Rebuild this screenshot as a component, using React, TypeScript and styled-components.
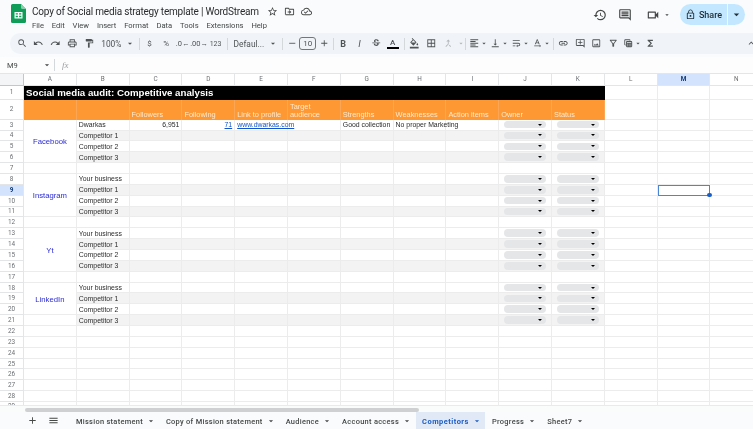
import React from 'react';
import styled, { createGlobalStyle } from 'styled-components';
import {
  MdAdd, MdArrowDropDown, MdBorderAll, MdCallMerge, MdFormatAlignLeft, MdFormatColorFill, MdFormatPaint,
  MdFunctions, MdHistory, MdKeyboardArrowUp, MdLockOutline, MdMenu, MdOutlineAddComment, MdOutlineCloudDone,
  MdOutlineComment, MdOutlineDriveFileMove, MdOutlineFilterAlt, MdOutlineImage, MdOutlineLink, MdOutlinePrint,
  MdOutlineTableView, MdOutlineVideocam, MdRedo, MdRemove, MdSearch, MdStarBorder, MdStrikethroughS, MdTextRotationNone,
  MdUndo, MdVerticalAlignBottom, MdWrapText,
} from 'react-icons/md';

const Global = createGlobalStyle`
  html, body { margin: 0; padding: 0; height: 100%; background: #f9fbfd; }
  * { box-sizing: border-box; }
`;

const Page = styled.div`
  width: 753px;
  height: 429px;
  overflow: hidden;
  display: flex;
  flex-direction: column;
  font-family: Roboto, "Liberation Sans", sans-serif;
  color: #444746;
  background: #f9fbfd;
  filter: blur(0.3px);
`;

const TitleBar = styled.header`
  height: 33px;
  flex: none;
  display: flex;
  align-items: flex-start;
  padding: 4px 8px 0 11px;
`;

const TitleText = styled.div`
  margin-left: 6px;
  display: flex;
  flex-direction: column;
`;

const TitleRow = styled.div`
  height: 15px;
  display: flex;
  align-items: center;
  font-size: 10px;
  letter-spacing: -0.2px;
  color: #2b2c2e;
  white-space: nowrap;
`;

const TitleIcons = styled.div`
  display: flex;
  align-items: center;
  gap: 6px;
  margin-left: 8px;
  font-size: 11px;
  color: #444746;
  & svg { display: block; }
`;

const Menu = styled.nav`
  height: 13px;
  display: flex;
  align-items: center;
  gap: 7.9px;
  font-size: 7.6px;
  color: #444746;
`;

const RightActions = styled.div`
  margin-left: auto;
  display: flex;
  align-items: center;
  height: 21px;
  font-size: 14px;
  & svg { display: block; }
`;

const Action = styled.span<{ $w: number; $pl?: number }>`
  width: ${p => p.$w}px;
  padding-left: ${p => p.$pl ?? 0}px;
  display: flex;
  align-items: center;
  justify-content: center;
`;

const Share = styled.div`
  width: 65px;
  height: 21px;
  margin-left: 9px;
  border-radius: 11px;
  background: #c2e7ff;
  display: flex;
  align-items: center;
  font-size: 9px;
  font-weight: 500;
  color: #23303a;
`;

const ShareMain = styled.div`
  flex: 1;
  display: flex;
  align-items: center;
  justify-content: center;
  gap: 3px;
  height: 100%;
  border-right: 1px solid #f0f8fe;
  font-size: 9px;
  & svg { font-size: 11px; }
`;

const ShareCaret = styled.div`
  width: 17px;
  display: flex;
  justify-content: center;
  font-size: 13px;
`;

const Toolbar = styled.div`
  height: 21px;
  flex: none;
  margin-left: 10px;
  padding-left: 3.6px;
  border-radius: 10px 0 0 10px;
  background: #f0f4f9;
  display: flex;
  align-items: center;
  font-size: 10.5px;
  color: #505355;
`;

const Tool = styled.span<{ $w?: number; $bold?: boolean; $italic?: boolean; $size?: number; $muted?: boolean }>`
  width: ${p => p.$w ?? 16.5}px;
  flex: none;
  display: flex;
  align-items: center;
  justify-content: center;
  white-space: nowrap;
  font-size: ${p => (p.$size ? `${p.$size}px` : 'inherit')};
  font-weight: ${p => (p.$bold ? 700 : 400)};
  font-style: ${p => (p.$italic ? 'italic' : 'normal')};
  color: ${p => (p.$muted ? '#b4b7b9' : 'inherit')};
  & svg { display: block; }
`;

const Caret = styled(Tool).attrs({ children: <MdArrowDropDown /> })`
  font-size: 11px;
`;

const Sep = styled.i<{ $l: number }>`
  width: 1px;
  height: 12px;
  flex: none;
  margin-left: ${p => p.$l}px;
  margin-right: 1px;
  background: #d5d8db;
`;

const SizeBox = styled.span`
  width: 17px;
  height: 13px;
  flex: none;
  border: 1px solid #747775;
  border-radius: 3px;
  display: flex;
  align-items: center;
  justify-content: center;
  font-size: 8px;
`;

const ColorSwatch = styled.span<{ $c: string }>`
  display: flex;
  flex-direction: column;
  align-items: center;
  line-height: 8px;
  font-size: 8px;
  font-weight: 500;
  &::after { content: ''; width: 12px; height: 2px; background: ${p => p.$c}; }
`;

const Collapse = styled(Tool)`
  margin-left: auto;
  margin-right: -6px;
`;

const FormulaBar = styled.div`
  height: 16px;
  flex: none;
  margin-top: 3px;
  display: flex;
  align-items: center;
  padding-left: 7px;
  background: #fdfdfe;
  font-size: 7.5px;
  color: #444746;
`;

const NameBox = styled.span`
  width: 33px;
`;

const Fx = styled.span`
  margin-left: 6px;
  font-family: "Liberation Serif", serif;
  font-style: italic;
  font-size: 9px;
  color: #9a9da0;
`;

const SheetArea = styled.div`
  flex: 1;
  min-height: 0;
  overflow: hidden;
  background: #fff;
  border-top: 1px solid #e3e5e7;
`;

const Sheet = styled.div`
  display: grid;
  width: 764px;
  grid-template-columns: 24px repeat(14, 52.8px);
  grid-template-rows: 11.6px 14.5px 19.6px repeat(26, 10.87px);
  font-family: "Liberation Sans", Arial, sans-serif;
  font-size: 6.9px;
  color: #2b2b2b;
`;

const Head = styled.div<{ $active?: boolean; $corner?: boolean }>`
  display: flex;
  align-items: center;
  justify-content: center;
  font-family: Roboto, sans-serif;
  font-size: 6.4px;
  font-weight: ${p => (p.$active ? 700 : 400)};
  color: ${p => (p.$active ? '#123a78' : '#6b6f73')};
  background: ${p => (p.$active ? '#d3e3fd' : p.$corner ? '#f4f5f6' : '#fff')};
  border-right: ${p => (p.$corner ? '1.5px solid #c4c7c9' : '1px solid #e3e5e7')};
  border-bottom: ${p => (p.$corner ? '1.5px solid #c4c7c9' : '1px solid #e3e5e7')};
`;

const Cell = styled.div<{ $grey?: boolean; $right?: boolean; $selected?: boolean; $spill?: boolean }>`
  position: relative;
  display: flex;
  align-items: center;
  justify-content: ${p => (p.$right ? 'flex-end' : 'flex-start')};
  padding: 0 2px;
  white-space: nowrap;
  min-width: 0;
  background: ${p => (p.$grey ? '#f3f3f3' : '#fff')};
  border-right: 1px solid #ececec;
  border-bottom: 1px solid #ececec;
  ${p => p.$spill && 'z-index: 1;'}
  ${p => p.$selected && 'outline: 1.4px solid #4a86d8; outline-offset: -1px; z-index: 2;'}
`;

const Handle = styled.span`
  position: absolute;
  right: -2.5px;
  bottom: -2.5px;
  width: 4.5px;
  height: 4.5px;
  border-radius: 50%;
  background: #1a5fc8;
`;

const TitleCell = styled.div`
  grid-column: span 11;
  display: flex;
  align-items: center;
  padding: 0 2px;
  background: #000;
  color: #fff;
  font-size: 9.7px;
  font-weight: 700;
  white-space: nowrap;
`;

const HeaderCell = styled.div`
  display: flex;
  align-items: flex-end;
  padding: 0 2px 0.5px;
  background: #fd9832;
  color: #ffe9cf;
  font-size: 7.4px;
  line-height: 8px;
  border-right: 1px solid #fba655;
`;

const Platform = styled.div<{ $span: number }>`
  grid-row: span ${p => p.$span};
  display: flex;
  align-items: center;
  justify-content: center;
  padding-top: 1.5px;
  background: #fff;
  color: #2a2ad4;
  font-size: 7.7px;
  border-right: 1px solid #ececec;
  border-bottom: 1px solid #ececec;
`;

const LinkText = styled.a`
  color: #1155cc;
  text-decoration: underline;
`;

const Chip = styled.div`
  flex: 1;
  height: 7.5px;
  margin: 0 3px;
  padding-right: 4px;
  border-radius: 4px;
  background: #e4e6e8;
  display: flex;
  align-items: center;
  justify-content: flex-end;
  &::after {
    content: '';
    border-left: 2.5px solid transparent;
    border-right: 2.5px solid transparent;
    border-top: 2.8px solid #000;
  }
`;

const ScrollTrack = styled.div`
  height: 7.5px;
  flex: none;
  padding: 2px 0 1px 25px;
  background: #fafbfb;
  border-top: 1px solid #e9eaeb;
`;

const ScrollThumb = styled.div`
  width: 394px;
  height: 4.5px;
  border-radius: 3px;
  background: #cfd0d1;
`;

const TabBar = styled.footer`
  height: 17px;
  flex: none;
  display: flex;
  align-items: stretch;
  padding-left: 23px;
  background: #f9fbfd;
  font-size: 7.45px;
  letter-spacing: 0.29px;
  font-weight: 500;
  color: #444746;
`;

const TabTool = styled.span`
  width: 18px;
  margin-right: 3px;
  display: flex;
  align-items: center;
  justify-content: center;
  font-size: 11px;
`;

const Tab = styled.div<{ $active?: boolean }>`
  display: flex;
  align-items: center;
  gap: 3px;
  padding: 1px 3px 0 6px;
  font-weight: ${p => (p.$active ? 700 : 500)};
  letter-spacing: ${p => (p.$active ? '0.5px' : 'inherit')};
  color: ${p => (p.$active ? '#1a5bc4' : '#444746')};
  background: ${p => (p.$active ? '#e1e9f7' : 'transparent')};
  white-space: nowrap;
  & svg { font-size: 10px; }
`;

const Tabs = styled.div`
  margin-left: 5px;
  display: flex;
  gap: 1px;
`;

const columns = 'ABCDEFGHIJKLMN'.split('');
const menus = ['File', 'Edit', 'View', 'Insert', 'Format', 'Data', 'Tools', 'Extensions', 'Help'];
const tabs = ['Mission statement', 'Copy of Mission statement', 'Audience', 'Account access', 'Competitors', 'Progress', 'Sheet7'];
const headers: Record<string, string> = {
  C: 'Followers', D: 'Following', E: 'Link to profile', F: 'Target audience', G: 'Strengths',
  H: 'Weaknesses', I: 'Action items', J: 'Owner', K: 'Status',
};
// LinkedIn is only merged over three rows in the sheet, so it sits higher than the rest
const platforms: Record<number, { name: string; span: number }> = {
  3: { name: 'Facebook', span: 4 },
  8: { name: 'Instagram', span: 4 },
  13: { name: 'Yt', span: 4 },
  18: { name: 'LinkedIn', span: 3 },
};
const mergedAway = [4, 5, 6, 9, 10, 11, 14, 15, 16, 19, 20];
const greyRows = [4, 6, 9, 11, 14, 16, 19, 21];
const rowNames: Record<number, string> = {
  3: 'Dwarkas', 4: 'Competitor 1', 5: 'Competitor 2', 6: 'Competitor 3',
  8: 'Your business', 9: 'Competitor 1', 10: 'Competitor 2', 11: 'Competitor 3',
  13: 'Your business', 14: 'Competitor 1', 15: 'Competitor 2', 16: 'Competitor 3',
  18: 'Your business', 19: 'Competitor 1', 20: 'Competitor 2', 21: 'Competitor 3',
};

const cellContent = (row: number, col: string) => {
  if (col === 'B') return rowNames[row];
  if ((col === 'J' || col === 'K') && rowNames[row]) return <Chip />;
  if (row !== 3) return null;
  if (col === 'C') return '6,951';
  if (col === 'D') return <LinkText>71</LinkText>;
  if (col === 'E') return <LinkText>www.dwarkas.com</LinkText>;
  if (col === 'G') return 'Good collection';
  if (col === 'H') return 'No proper Marketing';
  return null;
};

const inTable = (col: string) => col <= 'K';

const SheetsLogo = () => (
  <svg width="15" height="19" viewBox="0 0 15 19">
    <path d="M1.5 0H10l5 5v12.5a1.5 1.5 0 0 1-1.5 1.5h-12A1.5 1.5 0 0 1 0 17.500V1.500A1.500 1.500 0 0 1 1.500 0z" fill="#0f9d58" />
    <path d="M10 0l5 5h-3.500A1.500 1.500 0 0 1 10 3.500z" fill="#87ceac" />
    <path d="M3.500 8h8v6.500h-8zM4.700 9.200v1.400h2.200V9.200zm3.400 0v1.400h2.200V9.200zm-3.400 2.600v1.500h2.200v-1.500zm3.400 0v1.500h2.200v-1.500z" fill="#fff" fillRule="evenodd" />
  </svg>
);

const App = () => {
  const rows = Array.from({ length: 29 }, (_, i) => i + 1);

  return (
    <Page>
      <Global />
      <TitleBar>
        <SheetsLogo />
        <TitleText>
          <TitleRow>
            Copy of Social media strategy template | WordStream
            <TitleIcons>
              <MdStarBorder />
              <MdOutlineDriveFileMove />
              <MdOutlineCloudDone />
            </TitleIcons>
          </TitleRow>
          <Menu>
            {menus.map(m => <span key={m}>{m}</span>)}
          </Menu>
        </TitleText>
        <RightActions>
          <Action $w={25}><MdHistory /></Action>
          <Action $w={25}><MdOutlineComment /></Action>
          <Action $w={25.5} $pl={5}><MdOutlineVideocam /></Action>
          <Action $w={8}><MdArrowDropDown /></Action>
          <Share>
            <ShareMain><MdLockOutline />Share</ShareMain>
            <ShareCaret><MdArrowDropDown /></ShareCaret>
          </Share>
        </RightActions>
      </TitleBar>

      <Toolbar>
        <Tool $w={16.75}><MdSearch /></Tool>
        <Tool $w={16.75}><MdUndo /></Tool>
        <Tool $w={16.75}><MdRedo /></Tool>
        <Tool $w={16.75}><MdOutlinePrint /></Tool>
        <Tool $w={16.75}><MdFormatPaint /></Tool>
        <Tool $w={28} $size={8.4}>100%</Tool>
        <Caret $w={10} />
        <Sep $l={4} />
        <Tool $size={8}>$</Tool>
        <Tool $size={8}>%</Tool>
        <Tool $size={7.5}>.0←</Tool>
        <Tool $size={7.5}>.00→</Tool>
        <Tool $size={7}>123</Tool>
        <Sep $l={3.5} />
        <Tool $w={39} $size={8.4}>Defaul...</Tool>
        <Caret $w={10} />
        <Sep $l={4} />
        <Tool $w={15}><MdRemove /></Tool>
        <SizeBox>10</SizeBox>
        <Tool $w={15.5}><MdAdd /></Tool>
        <Sep $l={1} />
        <Tool $bold $size={9}>B</Tool>
        <Tool $italic $size={9.5}>I</Tool>
        <Tool><MdStrikethroughS /></Tool>
        <Tool><ColorSwatch $c="#000">A</ColorSwatch></Tool>
        <Sep $l={3} />
        <Tool $w={17}><MdFormatColorFill /></Tool>
        <Tool $w={17}><MdBorderAll /></Tool>
        <Tool $w={17} $muted><MdCallMerge /></Tool>
        <Caret $w={8} $muted />
        <Sep $l={0.5} />
        <Tool $w={13}><MdFormatAlignLeft /></Tool>
        <Caret $w={8} />
        <Tool $w={13}><MdVerticalAlignBottom /></Tool>
        <Caret $w={8} />
        <Tool $w={13}><MdWrapText /></Tool>
        <Caret $w={8} />
        <Tool $w={13}><MdTextRotationNone /></Tool>
        <Caret $w={8} />
        <Sep $l={2} />
        <Tool><MdOutlineLink /></Tool>
        <Tool><MdOutlineAddComment /></Tool>
        <Tool><MdOutlineImage /></Tool>
        <Tool><MdOutlineFilterAlt /></Tool>
        <Tool $w={13}><MdOutlineTableView /></Tool>
        <Caret $w={8} />
        <Tool><MdFunctions /></Tool>
        <Collapse><MdKeyboardArrowUp /></Collapse>
      </Toolbar>

      <FormulaBar>
        <NameBox>M9</NameBox>
        <Tool $w={14} $size={10}><MdArrowDropDown /></Tool>
        <Sep $l={0} />
        <Fx>fx</Fx>
      </FormulaBar>

      <SheetArea>
        <Sheet>
          <Head $corner />
          {columns.map(c => <Head key={c} $active={c === 'M'}>{c}</Head>)}
          {rows.map(row => (
            <React.Fragment key={row}>
              <Head $active={row === 9}>{row}</Head>
              {row === 1 && <TitleCell>Social media audit: Competitive analysis</TitleCell>}
              {columns.map(col => {
                if (row === 1 && inTable(col)) return null;
                if (row === 2 && inTable(col)) return <HeaderCell key={col}>{headers[col]}</HeaderCell>;
                if (col === 'A' && platforms[row]) {
                  return <Platform key={col} $span={platforms[row].span}>{platforms[row].name}</Platform>;
                }
                if (col === 'A' && mergedAway.includes(row)) return null;
                const selected = col === 'M' && row === 9;
                return (
                  <Cell
                    key={col}
                    $grey={inTable(col) && col !== 'A' && greyRows.includes(row)}
                    $right={row === 3 && (col === 'C' || col === 'D')}
                    $spill={row === 3 && (col === 'E' || col === 'H')}
                    $selected={selected}
                  >
                    {cellContent(row, col)}
                    {selected && <Handle />}
                  </Cell>
                );
              })}
            </React.Fragment>
          ))}
        </Sheet>
      </SheetArea>

      <ScrollTrack><ScrollThumb /></ScrollTrack>

      <TabBar>
        <TabTool><MdAdd /></TabTool>
        <TabTool><MdMenu /></TabTool>
        <Tabs>
          {tabs.map(t => (
            <Tab key={t} $active={t === 'Competitors'}>{t}<MdArrowDropDown /></Tab>
          ))}
        </Tabs>
      </TabBar>
    </Page>
  );
};

export default App;
